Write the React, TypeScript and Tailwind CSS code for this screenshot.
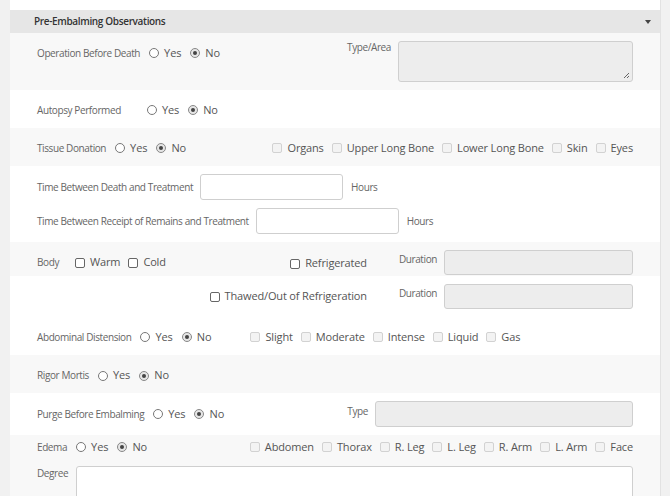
import React from 'react';

const font = { fontFamily: '"Open Sans", "Liberation Sans", sans-serif' };

const Radio: React.FC<{ label: string; checked?: boolean; className?: string }> = ({ label, checked, className }) => (
  <span className={`flex items-center ${className ?? ''}`}>
    {checked ? (
      <span className="w-[10px] h-[10px] rounded-full border border-[#888] bg-[#e6e6e6] flex items-center justify-center">
        <span className="w-[4px] h-[4px] rounded-full bg-[#444]" />
      </span>
    ) : (
      <span className="w-[10px] h-[10px] rounded-full border border-[#777] bg-white" />
    )}
    <span className="ml-[5px] text-[11px] tracking-[-0.1px] text-[#555]">{label}</span>
  </span>
);

const Check: React.FC<{ label: string; disabled?: boolean; className?: string }> = ({ label, disabled, className }) => (
  <span className={`flex items-center ${className ?? ''}`}>
    {disabled ? (
      <span className="w-[10px] h-[10px] rounded-[2px] border border-[#d2d2d2] bg-[#f3f3f3]" />
    ) : (
      <span className="w-[10px] h-[10px] rounded-[2px] border border-[#666] bg-white" />
    )}
    <span className="ml-[5px] text-[11px] tracking-[-0.15px] text-[#555]">{label}</span>
  </span>
);

const Label: React.FC<{ children: React.ReactNode; className?: string }> = ({ children, className }) => (
  <span className={`text-[10px] tracking-[-0.4px] text-[#666] whitespace-nowrap ${className ?? ''}`}>{children}</span>
);

const YesNo: React.FC<{ first?: string }> = ({ first = 'ml-[9px]' }) => (
  <>
    <Radio label="Yes" className={first} />
    <Radio label="No" checked className="ml-[9px]" />
  </>
);

const Field: React.FC<{ className?: string; disabled?: boolean }> = ({ className, disabled }) => (
  <div className={`rounded-[3px] border border-[#cfcfcf] ${disabled ? 'bg-[#ededed]' : 'bg-white'} ${className ?? ''}`} />
);

export default function App() {
  return (
    <div className="w-[670px] h-[496px] overflow-hidden bg-[#f1f1f1] flex" style={font}>
      <div className="ml-[10px] w-[651px] h-full bg-white border-r border-[#e2e2e2] pt-[10px]">
        {/* Header */}
        <div className="h-[23px] bg-[#e6e6e6] flex items-center pl-[24px] pr-[9px]">
          <span className="text-[10px] tracking-[-0.35px] text-[#333] font-semibold whitespace-nowrap">
            Pre-Embalming Observations
          </span>
          <span className="ml-auto w-0 h-0 border-l-[3px] border-r-[3px] border-t-[4px] border-l-transparent border-r-transparent border-t-[#444]" />
        </div>

        {/* Operation Before Death */}
        <div className="h-[57px] bg-[#f8f8f8] flex items-start pl-[27px] pr-[27px] pt-[8px]">
          <div className="flex items-center h-[24px]">
            <Label>Operation Before Death</Label>
            <YesNo />
          </div>
          <div className="ml-auto flex items-start">
            <Label className="-mt-[1px]">Type/Area</Label>
            <div className="ml-[7px] w-[235px] h-[41px] rounded-[3px] border border-[#cfcfcf] bg-[#ededed] relative">
              <svg className="absolute right-[2px] bottom-[2px]" width="7" height="7" viewBox="0 0 7 7">
                <path d="M6 1 L1 6 M6 4 L4 6" stroke="#666" strokeWidth="1" />
              </svg>
            </div>
          </div>
        </div>

        {/* Autopsy Performed */}
        <div className="h-[38px] bg-white flex items-center pl-[27px] pt-[2px]">
          <Label>Autopsy Performed</Label>
          <YesNo first="ml-[26px]" />
        </div>

        {/* Tissue Donation */}
        <div className="h-[38px] bg-[#f8f8f8] flex items-center pl-[27px] pr-[27px] pt-[2px]">
          <Label>Tissue Donation</Label>
          <YesNo />
          <div className="ml-auto flex items-center">
            <Check label="Organs" disabled />
            <Check label="Upper Long Bone" disabled className="ml-[8px]" />
            <Check label="Lower Long Bone" disabled className="ml-[8px]" />
            <Check label="Skin" disabled className="ml-[8px]" />
            <Check label="Eyes" disabled className="ml-[8px]" />
          </div>
        </div>

        {/* Times */}
        <div className="h-[76px] bg-white flex flex-col pl-[27px] pt-[8px] gap-[8px]">
          <div className="flex items-center">
            <Label>Time Between Death and Treatment</Label>
            <Field className="ml-[7px] w-[143px] h-[26px]" />
            <Label className="ml-[8px]">Hours</Label>
          </div>
          <div className="flex items-center">
            <Label>Time Between Receipt of Remains and Treatment</Label>
            <Field className="ml-[7px] w-[143px] h-[26px]" />
            <Label className="ml-[8px]">Hours</Label>
          </div>
        </div>

        {/* Body */}
        <div className="h-[34px] bg-[#f8f8f8] flex items-start pl-[27px] pr-[27px] pt-[8px]">
          <div className="flex items-center h-[25px]">
            <Label>Body</Label>
            <Check label="Warm" className="ml-[16px]" />
            <Check label="Cold" className="ml-[8px]" />
          </div>
          <div className="ml-auto flex items-start">
            <Check label="Refrigerated" className="h-[25px] mt-[1px]" />
            <Label className="ml-[32px] mt-[2px]">Duration</Label>
            <Field disabled className="ml-[7px] w-[189px] h-[25px]" />
          </div>
        </div>

        {/* Thawed + Abdominal Distension */}
        <div className="h-[79px] bg-white flex flex-col pl-[27px] pr-[27px] pt-[8px]">
          <div className="flex items-start justify-end">
            <Check label="Thawed/Out of Refrigeration" className="h-[25px]" />
            <Label className="ml-[32px] mt-[2px]">Duration</Label>
            <Field disabled className="ml-[7px] w-[189px] h-[25px]" />
          </div>
          <div className="flex items-center mt-[20px]">
            <Label>Abdominal Distension</Label>
            <YesNo />
            <Check label="Slight" disabled className="ml-[39px]" />
            <Check label="Moderate" disabled className="ml-[8px]" />
            <Check label="Intense" disabled className="ml-[8px]" />
            <Check label="Liquid" disabled className="ml-[8px]" />
            <Check label="Gas" disabled className="ml-[8px]" />
          </div>
        </div>

        {/* Rigor Mortis */}
        <div className="h-[38px] bg-[#f8f8f8] flex items-center pl-[27px] pt-[3px]">
          <Label>Rigor Mortis</Label>
          <YesNo />
        </div>

        {/* Purge Before Embalming */}
        <div className="h-[42px] bg-white flex items-start pl-[27px] pr-[27px] pt-[8px]">
          <div className="flex items-center h-[26px]">
            <Label>Purge Before Embalming</Label>
            <YesNo />
          </div>
          <div className="ml-auto flex items-start">
            <Label className="mt-[3px]">Type</Label>
            <Field disabled className="ml-[7px] w-[258px] h-[26px]" />
          </div>
        </div>

        {/* Edema */}
        <div className="h-[70px] bg-[#f8f8f8] flex flex-col pl-[27px] pr-[27px] pt-[4px]">
          <div className="flex items-center h-[16px]">
            <Label>Edema</Label>
            <YesNo />
            <div className="ml-auto flex items-center">
              <Check label="Abdomen" disabled />
              <Check label="Thorax" disabled className="ml-[8px]" />
              <Check label="R. Leg" disabled className="ml-[8px]" />
              <Check label="L. Leg" disabled className="ml-[8px]" />
              <Check label="R. Arm" disabled className="ml-[8px]" />
              <Check label="L. Arm" disabled className="ml-[8px]" />
              <Check label="Face" disabled className="ml-[8px]" />
            </div>
          </div>
          <div className="flex items-start mt-[11px]">
            <Label>Degree</Label>
            <Field className="ml-[8px] flex-1 h-[40px]" />
          </div>
        </div>
      </div>
    </div>
  );
}
